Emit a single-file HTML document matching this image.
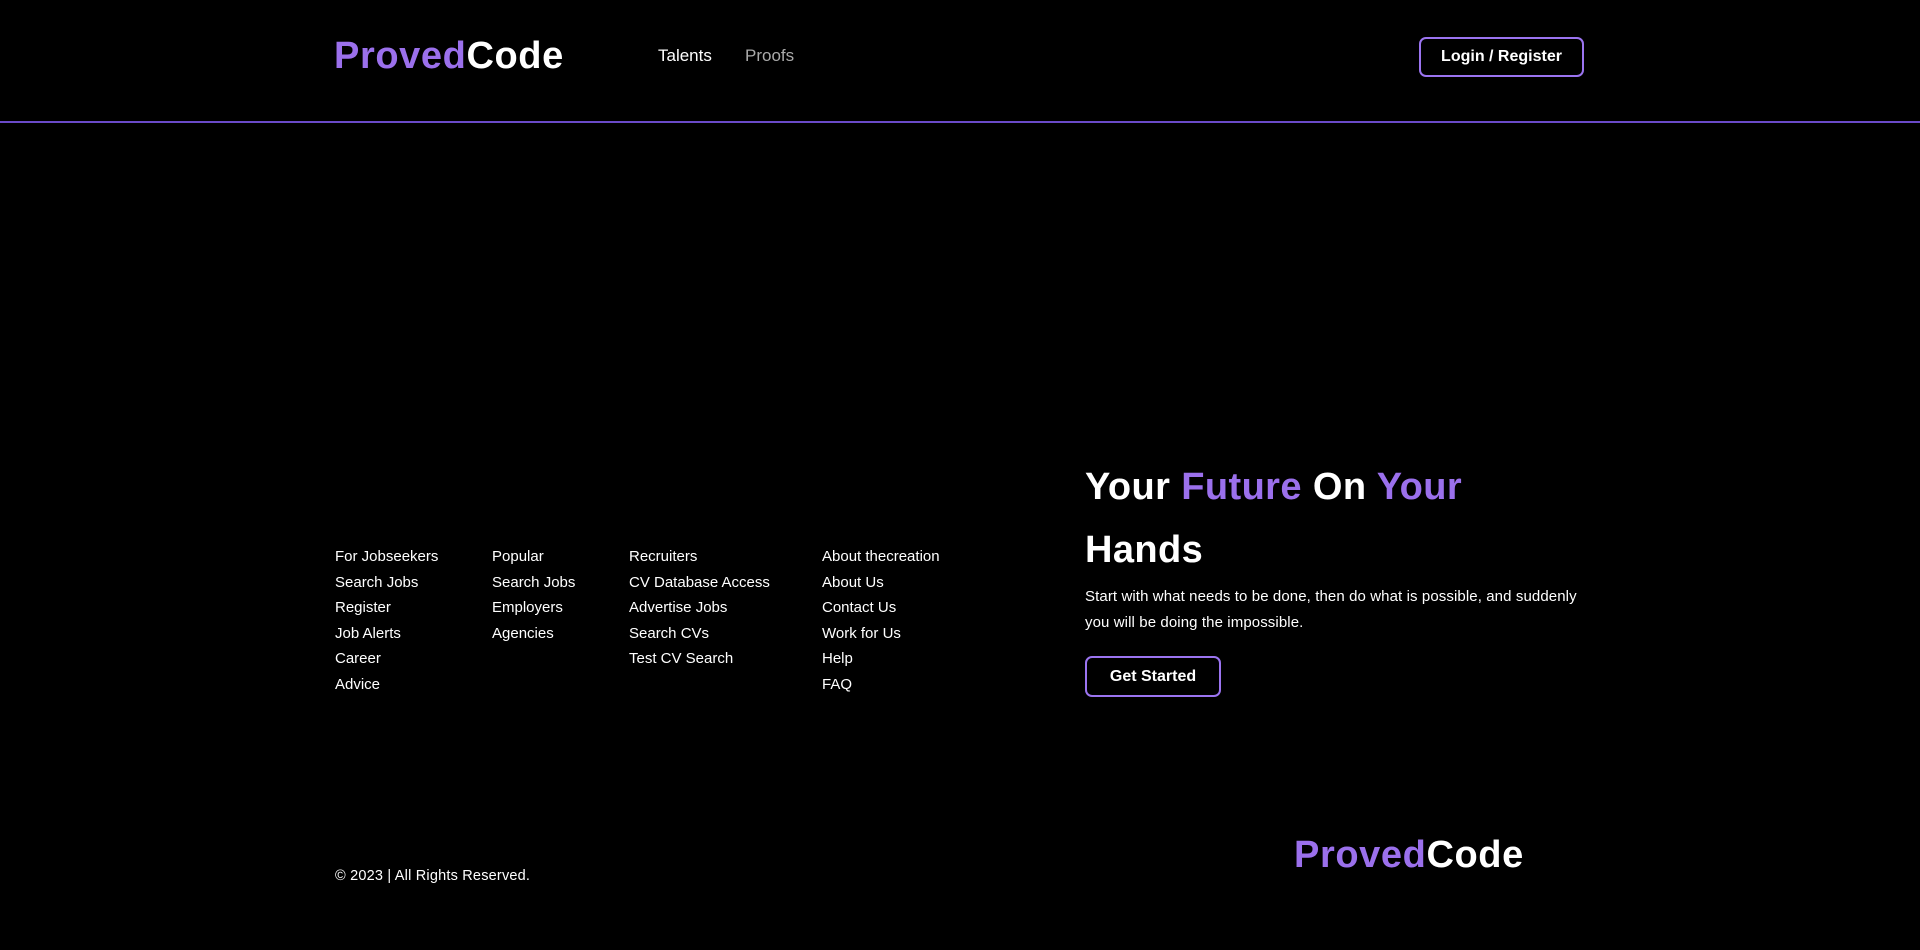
<!DOCTYPE html>
<html><head><meta charset="utf-8"><style>
*{margin:0;padding:0;box-sizing:border-box}
body{width:1920px;height:950px;background:#000;color:#fff;font-family:"Liberation Sans",sans-serif;position:relative;overflow:hidden}
.abs{position:absolute;white-space:nowrap}
.logo{font-weight:bold;font-size:38px;letter-spacing:0.6px}
.logo span{color:#9b70ec}
.nav{font-size:17px;top:46px}
.btn{position:absolute;border:2px solid #9b74f0;border-radius:7px;display:flex;align-items:center;justify-content:center;font-size:16px;font-weight:bold;color:#fff}
.col{position:absolute;top:544px;font-size:15px;line-height:25.6px}
.h{font-size:38px;font-weight:bold;letter-spacing:0.4px}
.h span{color:#9b70ec}
</style></head><body>
<div class="abs logo" style="left:334px;top:35px">
<span>Proved</span>Code</div>
<div class="abs nav" style="left:658px">Talents</div>
<div class="abs nav" style="left:745px;color:#aaa">Proofs</div>
<div class="btn" style="left:1419px;top:37px;width:165px;height:40px">Login / Register</div>
<div class="abs" style="left:0;top:121px;width:1920px;height:2px;background:#6a4ac8"></div>

<div class="col" style="left:335px">For Jobseekers<br>Search Jobs<br>Register<br>Job Alerts<br>Career<br>Advice</div>
<div class="col" style="left:492px">Popular<br>Search Jobs<br>Employers<br>Agencies</div>
<div class="col" style="left:629px">Recruiters<br>CV Database Access<br>Advertise Jobs<br>Search CVs<br>Test CV Search</div>
<div class="col" style="left:822px">About thecreation<br>About Us<br>Contact Us<br>Work for Us<br>Help<br>FAQ</div>

<div class="abs h" style="left:1085px;top:456px;line-height:63px">Your <span>Future</span> On <span>Your</span><br>Hands</div>
<div class="abs" style="left:1085px;top:584px;font-size:15px;line-height:26px;letter-spacing:0.1px">Start with what needs to be done, then do what is possible, and suddenly<br>you will be doing the impossible.</div>
<div class="btn" style="left:1085px;top:656px;width:136px;height:41px">Get Started</div>

<div class="abs" style="left:335px;top:868px;font-size:14.5px;letter-spacing:0.2px">© 2023 | All Rights Reserved.</div>
<div class="abs logo" style="left:1294px;top:834px"><span>Proved</span>Code</div>
</body></html>
